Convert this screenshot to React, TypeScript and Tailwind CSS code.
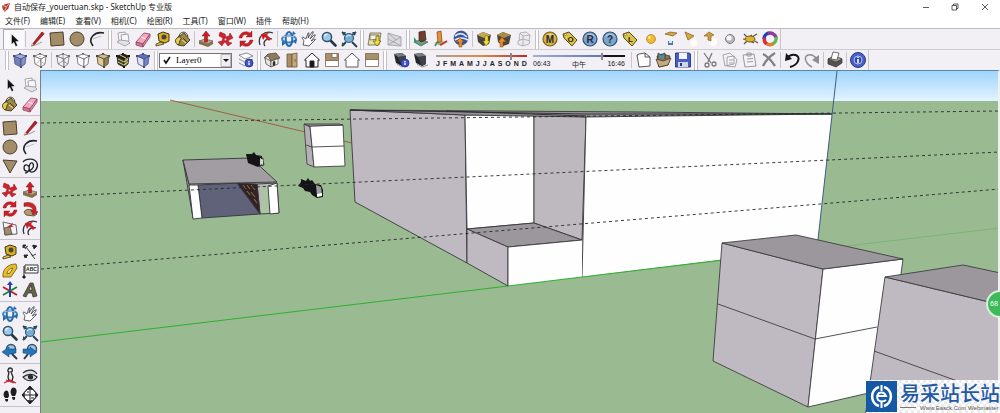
import React, { useState } from 'react';

const cube = (face: string, side: string, top: string, line: string) => (
  <g stroke={line} strokeWidth="0.8" strokeLinejoin="round">
    <path fill={side} d="M4 6l7 3v8l-6-3z" />
    <path fill={face} d="M11 9l5-3-1 8-4 3z" />
    <path fill={top} d="M4 6l6-2 6 2-5 3z" />
    <path fill={line} stroke="none" d="M3 5h2v2H3zM15 5h2v2h-2zM10 16h2v2h-2zM9 3h2v1.500H9z" />
  </g>
);

const lens = (
  <g>
    <path d="M11.500 11.500l5 5" stroke="#24384a" strokeWidth="2.600" strokeLinecap="round" />
    <circle cx="8" cy="8" r="4.600" fill="#9cc9ea" stroke="#33536b" strokeWidth="1.500" />
    <path d="M5.500 7.500a3 3 0 0 1 3-2.300" stroke="#e9f6ff" strokeWidth="1.300" fill="none" />
  </g>
);

const coin = (fill: string, rim: string, letter: string) => (
  <g>
    <circle cx="10" cy="10" r="7" fill={fill} stroke={rim} strokeWidth="1.200" />
    <path d="M5 8a5.500 5.500 0 0 1 10 0q-5-3-10 0z" fill="#fff" opacity="0.45" />
    <text x="10" y="13.500" textAnchor="middle" fontSize="10" fontWeight="700" fill="#222b38">{letter}</text>
  </g>
);

const tag = (letter: string) => (
  <g>
    <path d="M3 5l6-2 8 8-5 6-8-8z" fill="#dfc347" stroke="#55491c" strokeWidth="1" />
    <circle cx="5.500" cy="5.500" r="1.100" fill="#fff" stroke="#55491c" strokeWidth="0.600" />
    <text x="10.500" y="13" textAnchor="middle" fontSize="8" fontWeight="700" fill="#26220f">{letter}</text>
  </g>
);

const infoDot = (cx: number, cy: number, r: number) => (
  <g>
    <circle cx={cx} cy={cy} r={r} fill="#3f55c9" stroke="#22307f" strokeWidth="0.800" />
    <path d={`M${cx} ${cy - r / 2}v1.200M${cx} ${cy - 0.3}v${r / 2 + 0.3}`} stroke="#fff" strokeWidth="1.400" />
  </g>
);

const camera = (
  <g>
    <path d="M3 4l8-1 4 3v8l-4 2-6-3z" fill="#24272b" />
    <path d="M3 4l8-1 4 3-8 1z" fill="#777c82" />
    <path d="M7 7l8-1v8l-4 2z" fill="#3f444a" />
    <path d="M6 14l5 3 6-2" stroke="#8d9297" fill="none" />
  </g>
);

const ICONS: Record<string, React.ReactNode> = {
  select: <path d="M7.500 4v10.500l2.300-2.200 1.900 4.200 1.900-.9-1.900-4 3.300-.3z" fill="#111" stroke="#fff" strokeWidth="0.400" />,
  pencil: (
    <g>
      <path d="M4 17L15 3l2.200 1.700L7 16z" fill="#c11f25" stroke="#6a1014" strokeWidth="0.700" />
      <path d="M4 17l.8-3 2.200 2z" fill="#e7c69a" />
      <path d="M5 17q5-1 10-4" stroke="#777" strokeWidth="0.700" fill="none" />
    </g>
  ),
  rect: <path d="M3 4l13-1 1 13-13 1z" fill="#a38c68" stroke="#4b3f2d" strokeWidth="1" />,
  circle: <circle cx="10" cy="10" r="7" fill="#a38c68" stroke="#4b3f2d" strokeWidth="1" />,
  polygon: <path d="M3 4l14 1-7 12z" fill="#a38c68" stroke="#4b3f2d" strokeWidth="1" />,
  arc: (
    <g fill="none" stroke="#20242c">
      <path d="M6 17C0 9 8 2 17 4" strokeWidth="1.600" />
      <path d="M6 10l8-3" stroke="#a3a3a3" strokeWidth="0.700" />
    </g>
  ),
  freehand: (
    <g fill="none" stroke="#20242c" strokeWidth="1.300">
      <path d="M3 6c3-4 12-4 14 1s-3 10-6 9-2-8 0-9 4 3 1 6-8 3-8-1 4-4 5-1-1 6-4 6" />
    </g>
  ),
  component: (
    <g fill="#f7f7f9" stroke="#9b9ba3" strokeWidth="0.900">
      <path d="M5 4l7-1 1 7-7 2z" />
      <path d="M8 6l7-1 1 7-7 2z" />
      <path d="M4 13l3-2 8 1 2 2-5 3z" fill="#e3e3e8" />
    </g>
  ),
  eraser: (
    <g stroke="#8b4560" strokeWidth="0.800">
      <path d="M3 13l8-9 6 1-7 10z" fill="#f4a8bd" />
      <path d="M3 13l7 2v3l-7-2z" fill="#d9758f" />
      <path d="M10 15l7-10v3l-7 10z" fill="#e48fa6" />
      <path d="M8 8l5 2" stroke="#fff" />
    </g>
  ),
  paint: (
    <g stroke="#3c3618" strokeWidth="0.900">
      <path d="M5 8l6-4 6 7-6 6-6-1z" fill="#9c8848" />
      <path d="M4 9c-3 2-1 6 1 7 2-1 1-4 3-6 1-2-2-3-4-1z" fill="#e3cf4c" />
      <path d="M6 8c0-6 8-7 9 0M10 9l5 5" fill="none" />
      <path d="M9 11l4 3" stroke="#fff2a0" />
    </g>
  ),
  tape: (
    <g>
      <path d="M5 5l5-2 6 2v7l-4 2-6-2z" fill="#dcae22" stroke="#3f3618" strokeWidth="1" />
      <circle cx="11" cy="8" r="2.500" fill="#44453b" />
      <path d="M8 13l-5 2v2l8-2z" fill="#e8c53d" stroke="#3f3618" strokeWidth="0.800" />
    </g>
  ),
  pushpull: (
    <g>
      <path d="M3 12l6-2 8 2-5 3z" fill="#c1a987" stroke="#54472f" strokeWidth="0.600" />
      <path d="M3 12l9 3v3l-9-3zM12 15l5-3v3l-5 3z" fill="#826e4e" />
      <path d="M10 2l4 5h-2.500v6h-3V7H6z" fill="#cf1d24" stroke="#7d1115" strokeWidth="0.500" />
    </g>
  ),
  move: (
    <g fill="#d2232a" stroke="#861318" strokeWidth="0.500">
      <path d="M4 3l5 2 1 3 3-1 1-3 3 5-4 2-1 2 4 1-4 3-3-4-2 2-1 2-4-4 4-1 1-3-4-2z" />
      <path d="M9 9l2 1-1 2-2-1z" fill="#f3f0f4" />
    </g>
  ),
  rotate: (
    <g fill="#ce1f27" stroke="#7e1015" strokeWidth="0.400">
      <path d="M3 9a7 7 0 0 1 11-5l2-2v6h-6l2-2a4 4 0 0 0-6 3z" />
      <path d="M17 11a7 7 0 0 1-11 5l-2 2v-6h6l-2 2a4 4 0 0 0 6-3z" />
    </g>
  ),
  offset: (
    <g fill="none">
      <path d="M4 16C1 8 8 1 17 4" stroke="#35343a" strokeWidth="1.300" />
      <path d="M9 17c-3-4 2-9 7-7" stroke="#35343a" strokeWidth="1.300" />
      <path d="M5 5l8-1-2 2 4 4-2 2-4-4-2 3z" fill="#cf1d24" />
    </g>
  ),
  follow: (
    <g>
      <path d="M4 13c2-4 8-3 11 0l2 2-3 2-8-1z" fill="#b39a72" stroke="#4b3f2d" strokeWidth="0.800" />
      <path d="M4 4c8-2 13 2 12 8l2 1-5 3-2-5 2 .500c0-3-4-5-9-4z" fill="#d0242b" stroke="#6d1014" strokeWidth="0.500" />
    </g>
  ),
  scale: (
    <g stroke="#55565a" strokeWidth="0.900">
      <path d="M3 4l13 3 1 9-12 1z" fill="#f6f5f6" />
      <path d="M4 10l6-1 2 7-7 1z" fill="#a28b68" />
      <path d="M7 9l6-4-1 3 2 1z" fill="#cf1d24" stroke="none" />
    </g>
  ),
  orbit: (
    <g fill="none" strokeWidth="2">
      <ellipse cx="10" cy="10" rx="7" ry="3.500" stroke="#3b84c4" />
      <ellipse cx="10" cy="10" rx="3.300" ry="7" stroke="#286baa" />
      <path d="M14 2l3 3-4 1zM3 12l4 2-4 3zM14 12l4-2-1 5z" fill="#2467a8" stroke="none" />
      <path d="M4 8q6-3 11 0" stroke="#b0dcf7" strokeWidth="0.800" />
    </g>
  ),
  pan: <path d="M4 16l1-4c-1-2-3-4-1-4l3 2 2-6q1-1 1 1L9 9l4-6q2-1 1 1l-3 6 4-4q2-1 1 1l-4 5 4-2q1 0 0 1l-6 6z" fill="#fff" stroke="#3a3b42" strokeWidth="0.800" />,
  zoom: lens,
  zoomExtents: (
    <g>
      <path d="M3 3l4 3M17 3l-4 3M3 17l4-4M13 13l5 5" stroke="#2a4151" strokeWidth="2" />
      <circle cx="10" cy="9" r="4.500" fill="#77add5" stroke="#355b76" strokeWidth="1.200" />
      <path d="M3 3l4 0-3 4zM17 3h-4l3 4zM3 17v-4l3 3z" fill="#2b4b60" />
      <path d="M7 8q2-3 5-1" stroke="#def3ff" fill="none" />
    </g>
  ),
  zoomPrev: (
    <g>
      <path d="M12 12l5 5" stroke="#24384a" strokeWidth="2" />
      <circle cx="11" cy="7" r="4.500" fill="#9cc9ea" stroke="#33536b" strokeWidth="1.500" />
      <path d="M16 7H9V5l-7 5 7 5v-3l7-1z" fill="#2376b9" stroke="#123c63" strokeWidth="0.500" />
    </g>
  ),
  zoomNext: (
    <g>
      <path d="M8 12l-4 5" stroke="#24384a" strokeWidth="2" />
      <circle cx="12" cy="7" r="4.500" fill="#9cc9ea" stroke="#33536b" strokeWidth="1.500" />
      <path d="M3 7l7 0V5l7 5-7 5v-3l-7-1z" fill="#2376b9" stroke="#123c63" strokeWidth="0.500" />
    </g>
  ),
  addLocation: (
    <g stroke="#555044" strokeWidth="0.700">
      <path d="M5 4h11l-2 12H3z" fill="#e9e2a7" />
      <path d="M5 6l9 0-1 4-8 1z" fill="#f6f3dc" />
      <path d="M11 7h3v5h2l-4 5-4-5h3z" fill="#f5df2a" />
    </g>
  ),
  terrain: (
    <g fill="#dadadd" stroke="#999a9e" strokeWidth="0.800">
      <path d="M3 4l13 4v9l-13-1z" />
      <path d="M3 4l8 7-8 5M11 11l5-3M3 10l13 7" fill="none" />
    </g>
  ),
  texture: (
    <g>
      <path d="M3 13l6-2 8 2-7 4z" fill="#6aa184" stroke="#34624b" strokeWidth="0.700" />
      <path d="M8 3l6-1 1 9-5 2-2-2z" fill="#713d30" stroke="#392019" strokeWidth="0.700" />
      <path d="M3 8l3 4-3 2z" fill="#32996a" />
    </g>
  ),
  building: (
    <g>
      <path d="M3 14l5-2 9 1-7 4z" fill="#9bb594" />
      <path d="M6 3l4-1 1 10-4 2z" fill="#ed8e2e" stroke="#75411a" strokeWidth="0.700" />
      <path d="M9 16l7-4" stroke="#cc3329" strokeWidth="1.500" />
      <path d="M4 17l3-5" stroke="#4b8c4b" strokeWidth="1.500" />
    </g>
  ),
  earth: (
    <g>
      <circle cx="10" cy="9" r="7" fill="#39549d" stroke="#23356b" strokeWidth="0.600" />
      <path d="M4 7q6-5 12 1M4 11q6-4 13 0" stroke="#dfe8f7" strokeWidth="1.700" fill="none" />
      <path d="M8 18v-5H5l4-4 4 4h-2v5z" fill="#ec8c26" stroke="#754615" strokeWidth="0.500" />
    </g>
  ),
  getModels: (
    <g>
      <path d="M3 6l6-3 8 3-2 9-6 2-5-4z" fill="#45443d" />
      <path d="M3 6l6-3 8 3-7 3z" fill="#c3a954" />
      <path d="M11 7h3v5h2l-4 5-3-5h2z" fill="#f5df2a" stroke="#6e6118" strokeWidth="0.500" />
    </g>
  ),
  shareModel: (
    <g>
      <path d="M3 6l6-3 8 3-2 9-6 2-5-4z" fill="#4b463b" />
      <path d="M3 6l6-3 8 3-7 3z" fill="#aa8c48" />
      <path d="M6 18v-5H4l4-5 4 5H9v5z" fill="#e58c26" stroke="#744415" strokeWidth="0.500" />
    </g>
  ),
  shareComponent: (
    <g fill="#ececee" stroke="#a3a3a8" strokeWidth="0.800">
      <path d="M6 4l6-1 4 3-1 6-6 1-4-3z" />
      <path d="M4 12l5-2 7 2-1 3-6 2-5-2zM9 13v4M6 4l3 3 7-1M9 7v6" />
    </g>
  ),
  mCoin: coin('#dab13b', '#7a621d', 'M'),
  oTag: tag('O'),
  rCoin: coin('#7da2cf', '#34516f', 'R'),
  qCoin: coin('#7aa5cd', '#34516f', '?'),
  lTag: tag('L'),
  omni: <g><circle cx="11" cy="10" r="4.500" fill="#f1b92c" stroke="#a87d23" strokeWidth="0.700" /><circle cx="9.500" cy="8.500" r="1.500" fill="#fde89b" /></g>,
  plane: <g><path d="M5 5l5-2 7 1-4 3z" fill="#dba73d" stroke="#765b26" strokeWidth="0.700" /><path d="M8 12h5v4H8z" fill="#4b79a8" /><path d="M9 12h3v2H9z" fill="#d5e8f7" /></g>,
  spot: <g><circle cx="14" cy="14" r="3.500" fill="#fffef6" /><path d="M5 3l9 4-6 4z" fill="#dba737" stroke="#785c20" strokeWidth="0.700" /></g>,
  ies: <g><circle cx="13" cy="13" r="4" fill="#fffef6" /><path d="M4 7l5-4 5 3-3 1v5l-3-1V7z" fill="#d49a37" stroke="#795721" strokeWidth="0.600" /></g>,
  sphere: <g><circle cx="10" cy="10" r="4.500" fill="#b9b9bd" stroke="#66676c" strokeWidth="0.800" /><circle cx="9" cy="9" r="2.500" fill="#f9f9fa" /></g>,
  bug: <g><path d="M4 5l4 4 4-3M3 10l5 1-4 4M10 12l4 2M12 8l5-3M13 11l5 3" stroke="#5d5530" strokeWidth="1.200" fill="none" /><ellipse cx="10" cy="10" rx="5" ry="3" fill="#d7b42f" stroke="#7a611c" /></g>,
  swirl: (
    <g fill="none" strokeWidth="3.500">
      <path d="M4 10a6 6 0 0 1 5-6" stroke="#283fad" />
      <path d="M8 4.500a6 6 0 0 1 8 4" stroke="#8a39a2" />
      <path d="M16 8a6 6 0 0 1-4 7" stroke="#68b64c" />
      <path d="M13 15a6 6 0 0 1-7-1" stroke="#de7f32" />
      <path d="M6.500 15a6 6 0 0 1-2-6" stroke="#d82d42" />
    </g>
  ),
  xray: cube('#8895c8', '#7481b9', '#a3afda', '#434d7e'),
  backEdges: <g>{cube('#fff', '#fff', '#fff', '#666')}<path d="M10 4v7l-5 3M10 11l5 3" stroke="#888" strokeDasharray="1 1" fill="none" /></g>,
  wire: <g>{cube('#f4f2f6', '#f4f2f6', '#f4f2f6', '#707075')}<path d="M10 4v7l-5 3M10 11l5 3" stroke="#777" strokeWidth="0.700" fill="none" /></g>,
  hidden: cube('#fff', '#fff', '#fff', '#66666c'),
  shaded: cube('#91805a', '#e0cc93', '#cfbd89', '#4c4738'),
  textured: <g>{cube('#8d8050', '#3d3a27', '#23231d', '#15150f')}<path d="M5 9l6 3 4-3M5 12l6 3 4-3M7 5l6 3" stroke="#dfd381" fill="none" /></g>,
  mono: cube('#7384ce', '#dde2f5', '#5d70bf', '#414d7d'),
  layers: (
    <g>
      <path d="M3 5l8-2 6 3-8 3zM3 9l6 3 8-3M3 13l6 3 8-3" fill="#fff" stroke="#6a7478" strokeWidth="0.800" />
      {infoDot(13, 13, 4)}
    </g>
  ),
  iso: (
    <g stroke="#44413a" strokeWidth="0.700">
      <path d="M3 8l6 3v6l-5-3z" fill="#e9e4dc" />
      <path d="M9 11l7-3v6l-7 3z" fill="#fff" />
      <path d="M2 8l4-4 8-1 4 5-9 3-3-5z" fill="#8e7b5c" />
      <path d="M11 12l2-1v4l-2 1z" fill="#222" />
    </g>
  ),
  topView: <g stroke="#66543a" strokeWidth="0.800"><path d="M5 4h5v13H5z" fill="#ab9065" /><path d="M10 4l5-1v14h-5z" fill="#c6aa7c" /><path d="M13 9v3" /></g>,
  front: <g stroke="#26262a" strokeWidth="1"><path d="M2.500 10L10 3l7.500 7H16v7H4v-7z" fill="#fff" /><path d="M8 11h4v6H8z" fill="#161619" /></g>,
  rightView: <g stroke="#75664e" strokeWidth="0.800"><path d="M3.500 3.500h13v7h-13z" fill="#a7916b" /><path d="M3.500 10.500h13v6h-13zM10 3.500h5v4h-5z" fill="#fff" /></g>,
  back: <path d="M2.500 10L10 3l7.500 7H16v7H4v-7z" fill="#fff" stroke="#4b4b50" strokeWidth="0.900" />,
  leftView: <g stroke="#75664e" strokeWidth="0.800"><path d="M3.500 3.500h13v6h-13z" fill="#a7916b" /><path d="M3.500 9.500h13v7h-13z" fill="#fff" /></g>,
  shadowInfo: <g>{camera}{infoDot(14, 13, 4)}</g>,
  shadow: camera,
  newFile: <path d="M4 5l2-1 6-1 5 4v9l-11 1zM12 3v4h5" fill="#fff" stroke="#47474c" strokeWidth="0.900" />,
  open: (
    <g stroke="#45392a" strokeWidth="0.800">
      <path d="M4 6l5-2 8 2-2 9-9 2z" fill="#8a7350" />
      <path d="M5 8V3l3 2 4-2v6" fill="#4f8ea4" />
      <path d="M3 9l7 2 8-3-3 7-9 2z" fill="#c5ab7d" />
    </g>
  ),
  save: (
    <g>
      <path d="M2.500 3h14l1 1v13h-15z" fill="#4a5dc3" stroke="#273476" strokeWidth="0.900" />
      <path d="M6 3h8v6H6z" fill="#f4f7ff" />
      <path d="M5 12h10v5H5z" fill="#ccd6ec" />
      <path d="M7 13h2v3H7z" fill="#293776" />
    </g>
  ),
  cut: <g fill="none" stroke="#78797e" strokeWidth="1.300"><path d="M5 3l7 10M13 3L9 12" /><circle cx="15" cy="14" r="2" /><circle cx="8" cy="15" r="2" /></g>,
  copy: <g fill="#f5f4f6" stroke="#9b9ba0" strokeWidth="0.900"><path d="M4 5l7-2 4 4v7l-9 2zM8 7l7-1 3 4-2 7-8-1z" /><path d="M10 10h4M10 13h4" /></g>,
  paste: <g fill="#f4f3f5" stroke="#98989d" strokeWidth="1"><path d="M4 5l11-1 2 12-11 1zM8 3h4v3H8z" /><path d="M8 9l6-.5M8 12l6-.5" /></g>,
  del: <path d="M4 4q6 3 12 12M16 3Q8 8 4 16" stroke="#808086" strokeWidth="2.300" fill="none" />,
  undo: <g fill="none" stroke="#161619" strokeWidth="2"><path d="M5 8c5-6 14-3 11 3-1 3-4 5-8 6" /><path d="M4 3l-1 8 7-2" fill="#161619" stroke="none" /></g>,
  redo: <g fill="none" stroke="#8d8e93" strokeWidth="1.500"><path d="M14 8C9 2 1 5 4 11c1 3 4 5 6 6" /><path d="M17 5v9l-7-4z" fill="#8d8e93" stroke="none" /></g>,
  print: (
    <g stroke="#333" strokeWidth="0.700">
      <path d="M3 9l5-2 9 2v4l-6 4-8-3z" fill="#55544c" />
      <path d="M3 9l8 3 6-3-2-1-5-1-2 0z" fill="#b0aca0" />
      <path d="M6 9l2-7 6 1-2 7z" fill="#fff" />
    </g>
  ),
  info: <g><circle cx="10" cy="10" r="7.500" fill="#4860cf" stroke="#29377f" strokeWidth="1" /><circle cx="10" cy="10" r="4" fill="#3448ac" stroke="#b5c4f2" /><path d="M10 7v1M10 9v4" stroke="#fff" strokeWidth="1.600" /></g>,
  dimension: (
    <g stroke="#2c2c30" strokeWidth="0.900" fill="none">
      <path d="M4 6l4-2M12 14l4-2M3 3l3 4M6 5l7 9M11 12l4 5M12 4l4 1M4 13l3 3" />
      <path d="M3 3h3l-3 3zM13 3l4 1-3 3zM4 13h4l-3 3z" fill="#222" />
    </g>
  ),
  protractor: <g stroke="#7a6317" strokeWidth="0.900"><path d="M3 16C2 8 8 3 16 3l1 4-6 9z" fill="#e7bd2d" /><path d="M7 13c0-3 3-6 6-6l-3 5z" fill="#fbe896" /></g>,
  label: (
    <g>
      <path d="M5 4h13v8H5z" fill="#fff" stroke="#333" />
      <text x="11.500" y="10" textAnchor="middle" fontSize="5" fontWeight="700" fill="#222">ABC</text>
      <path d="M4 5v11M3 15h2v2H3z" stroke="#222" />
    </g>
  ),
  axes: (
    <g strokeWidth="2" fill="none">
      <path d="M10 11V4" stroke="#2742b4" /><path d="M3 7l7 4 7 4" stroke="#be2027" /><path d="M3 15l7-4 7-4" stroke="#21813b" />
      <path d="M7 5l3-4 3 4z" fill="#2742b4" stroke="none" /><path d="M10 11v6" stroke="#283f97" />
    </g>
  ),
  text3d: <g stroke="#302f26" strokeWidth="0.700"><path d="M3 16L10 3h3l4 13-4 1-1-4H8l-2 4z" fill="#66634c" /><path d="M9 10l2-5 1 5z" fill="#efedf1" /></g>,
  positionCamera: (
    <g fill="none" stroke="#26262b" strokeWidth="1.300">
      <path d="M10 2c3 0 3 4 1 4l2 5-1 4H9l-1-4 1-5C7 6 8 2 10 2z" fill="#eee" />
      <path d="M4 17l6-3 6 3M6 14l8 3" stroke="#c42b31" />
    </g>
  ),
  look: (
    <g fill="none" stroke="#28292d" strokeWidth="1.200">
      <path d="M3 7c4-4 11-4 14 1M3 11c4 5 11 5 14 0-4-4-10-3-14 0z" fill="#dadade" />
      <circle cx="10.500" cy="11" r="2" fill="#2b2c31" />
    </g>
  ),
  walk: <g fill="#1e1e22"><path d="M5 6c3-2 4 2 4 5l-1 2H5C3 11 3 8 5 6zM5 14h3c1 3-3 4-3 0zM12 3c3-2 6 2 4 6l-1 2h-3c-2-3-2-6 0-8zM12 12h3c1 4-3 4-3 0z" /></g>,
  section: (
    <g fill="#fff" stroke="#232327" strokeWidth="1">
      <path d="M10 1l8 9-8 9-8-9z" fill="#232327" />
      <circle cx="10" cy="10" r="6" />
      <path d="M4 10h12M10 4v12M7 7h2M11 13h3" />
    </g>
  ),
};

const NAMES: Record<string, string> = {
  select: '选择', pencil: '直线', rect: '矩形', circle: '圆', arc: '圆弧', eraser: '擦除', paint: '颜料桶',
  tape: '卷尺', pushpull: '推/拉', move: '移动', rotate: '旋转', offset: '偏移', orbit: '环绕观察', pan: '平移',
  zoom: '缩放', save: '保存', undo: '撤销', redo: '重做', print: '打印',
};

const Tool = ({ id }: { id: string }) => (
  <button aria-label={NAMES[id] || id} className="w-5 h-[19px] shrink-0 flex items-center justify-center hover:bg-white">
    <svg viewBox="0 0 20 20" className="w-5 h-5 shrink-0 font-['Liberation_Sans']">{ICONS[id]}</svg>
  </button>
);

const Group = ({ ids }: { ids: string[] }) => (
  <div className="flex items-center">{ids.map((id) => <Tool key={id} id={id} />)}</div>
);

// thin line inside one toolbar
const Thin = () => <div className="w-px h-4 mx-px shrink-0 bg-[#c9c5cb]" />;
// grip between two docked toolbars
const Grip = () => <div className="w-1 h-[19px] mx-px shrink-0 border-x border-[#c4c0c6] bg-white" />;

const MENUS = ['文件(F)', '编辑(E)', '查看(V)', '相机(C)', '绘图(R)', '工具(T)', '窗口(W)', '插件', '帮助(H)'];

const PALETTE = [
  ['select', 'component', 'paint', 'eraser'],
  ['rect', 'pencil', 'circle', 'arc', 'polygon', 'freehand'],
  ['move', 'pushpull', 'rotate', 'follow', 'scale', 'offset'],
  ['tape', 'dimension', 'protractor', 'label', 'axes', 'text3d'],
  ['orbit', 'pan', 'zoom', 'zoomExtents', 'zoomPrev', 'zoomNext'],
  ['positionCamera', 'look', 'walk', 'section'],
];

const ShadowSliders = () => {
  const [month, setMonth] = useState(10);
  const [time, setTime] = useState(76);
  const slider = 'appearance-none block w-full h-[2px] my-[3px] [&::-webkit-slider-thumb]:appearance-none [&::-webkit-slider-thumb]:w-[2px] [&::-webkit-slider-thumb]:h-[7px] [&::-webkit-slider-thumb]:bg-[#8a878d]';
  return (
    <div className="flex gap-[6px] pl-[5px] w-[199px] shrink-0 font-['Liberation_Sans'] text-[7px] leading-[8px] text-[#222]">
      <div className="w-[91px]">
        <input type="range" aria-label="日期" min={0} max={12} value={month} onChange={(e) => setMonth(+e.target.value)}
          className={`${slider} bg-linear-to-r from-[#a3a294] via-[#dd8a45] to-[#b5262e]`} />
        <div className="flex justify-between font-bold">{'JFMAMJJASOND'.split('').map((m, i) => <span key={i}>{m}</span>)}</div>
      </div>
      <div className="w-[92px]">
        <input type="range" aria-label="时间" min={0} max={100} value={time} onChange={(e) => setTime(+e.target.value)}
          className={`${slider} bg-linear-to-r from-[#a4b0d4] from-0% via-[#6573b8] via-75% to-[#15151c] to-78%`} />
        <div className="flex justify-between h-2">
          <span>06:43</span>
          <span className="font-['Noto_Sans_CJK_SC',sans-serif]">中午</span>
          <span>16:46</span>
        </div>
      </div>
    </div>
  );
};

const Scene = () => (
  <svg viewBox="41 71 957 342" className="block w-full h-auto">
    <defs>
      <linearGradient id="sky" x1="0" y1="0" x2="0" y2="1">
        <stop offset="0" stopColor="#9fd4fc" />
        <stop offset="1" stopColor="#e3f4ff" />
      </linearGradient>
    </defs>
    <rect x="41" y="71" width="957" height="30" fill="url(#sky)" />
    <rect x="41" y="101" width="957" height="312" fill="#9abb91" />
    {/* axes */}
    <path d="M170 100L352 143" stroke="#a2543c" strokeWidth="0.900" />
    <path d="M41 342L508 286" stroke="#2fae33" />
    <path d="M582 277L1000 228" stroke="#6fb068" strokeWidth="0.700" />

    {/* main building */}
    <g stroke="#3a383c" strokeWidth="0.900" strokeLinejoin="round">
      <path d="M350 110L465 115L467 263L355 202z" fill="#bfbac1" />
      <path d="M465 115L534 114V223L467 229z" fill="#fefefe" />
      <path d="M534 114L586 117L582 240L534 223z" fill="#bdb9be" />
      <path d="M586 117L832 114L817 248L582 277z" fill="#fefefe" stroke="none" />
      <path d="M586 117L582 277" />
      <path d="M467 229L534 223L582 240L508 247z" fill="#9c979c" />
      <path d="M467 229L508 247V286L467 263z" fill="#bfbac1" />
      <path d="M508 247L582 240V277L508 286z" fill="#fefefe" stroke="none" />
      <path d="M508 286V247L582 240" fill="none" />
      <path d="M350 110L640 112L832 114L663 116L586 117L465 115z" fill="#969398" />
      <path d="M350 110L586 114L832 114M446 111L586 116" fill="none" stroke="#29272b" />
    </g>
    <path d="M508 286L722 260" stroke="#2fae33" />
    <path d="M837 71L817 248" stroke="#3e5c88" />

    {/* small stacked box */}
    <g stroke="#444046" strokeWidth="0.900" strokeLinejoin="round">
      <path d="M304 124L310 127L314 167L307 164z" fill="#b5b0b6" />
      <path d="M310 126L343 125L345 166L314 167z" fill="#fefefe" />
      <path d="M304 124L310 126L343 125L339 124z" fill="#9c979c" />
      <path d="M306 145L312 147L344 146" fill="none" />
    </g>

    {/* open shed */}
    <g stroke="#36343a" strokeWidth="0.900" strokeLinejoin="round">
      <path d="M198 185L240 183L260 214L202 218z" fill="#60627a" />
      <path d="M183 160L193 218L189 184z" fill="#aaa5ab" />
      <path d="M189 185H198L202 218L193 219z" fill="#fefefe" />
      <path d="M257 184L277 183L279 213L260 214z" fill="#b9b5ba" />
      <path d="M262 187L268 186L270 213H261z" fill="#a9c6a4" stroke="none" />
      <path d="M268 186L277 183L279 213L270 214z" fill="#fefefe" />
      <path d="M237 183L257 184L260 214z" fill="#312321" />
      <path d="M183 160L251 158L277 182L189 184z" fill="#a29da3" />
    </g>
    <path d="M243 185l3 4M247 185l3 4M251 185l4 5M247 191l3 4M251 192l4 5M254 199l3 4" stroke="#806452" strokeWidth="1.200" />

    {/* furniture */}
    <g>
      <path d="M246 154l6 0 2-2 2 3 6 1v9l-4 2-5-2-5-2z" fill="#141316" />
      <path d="M259 156q5 1 4 5l1 4-5 1" fill="none" stroke="#333" />
      <path d="M260 158l3 2v4l-3 1z" fill="#d7d5d7" />
      <path d="M298 186l3-4 0-3 5 2 2-3 2 3 2-1 3 4 6 1 2 5v7l-6 1-5-3-2-3-5-1-2-3z" fill="#141316" />
      <path d="M316 185l5 2 1 8-5 1z" fill="#a09da2" />
      <path d="M317 194l5-1v3l-5 1z" fill="#fff" />
    </g>

    {/* guides */}
    <path d="M41 123L1000 111M41 197L1000 152M41 269L1000 189" stroke="#28272a" strokeWidth="0.900" strokeDasharray="3 3" fill="none" />

    {/* front boxes */}
    <g stroke="#3f3d42" strokeWidth="0.900" strokeLinejoin="round">
      <path d="M722 243L823 269L808 407L713 361z" fill="#bfbac1" />
      <path d="M823 269L903 259L886 389L808 407z" fill="#fefefe" />
      <path d="M722 243L796 235L903 259L823 269z" fill="#9c979c" />
      <path d="M718 304L815 339L877 327" fill="none" />
      <path d="M885 277L1010 307V425H864z" fill="#bfbac1" />
      <path d="M885 277L963 265L1010 275V307z" fill="#9c979c" />
      <path d="M874 351L1010 400" />
    </g>
  </svg>
);

export default function App() {
  const [layer, setLayer] = useState('Layer0');

  return (
    <div className="min-h-screen flex flex-col bg-[#f3f0f5] text-[#222] font-['Noto_Sans','Noto_Sans_CJK_SC',sans-serif] text-[8px] overflow-hidden">
      <header className="h-[14px] flex items-center bg-white pl-[2px]">
        <svg viewBox="0 0 10 10" className="w-[9px] h-[9px] mr-[3px]">
          <path d="M0 3l4-2 5-1-2 6-4 4-2-3z" fill="#b73b31" />
          <path d="M1 3l4 1 3-3M5 4L3 9" stroke="#f3c8ba" fill="none" />
        </svg>
        <h1>自动保存_youertuan.skp - SketchUp 专业版</h1>
        <div className="ml-auto flex">
          <button aria-label="最小化" className="w-[29px] flex justify-center">
            <svg viewBox="0 0 8 8" className="w-2 h-2"><path d="M1 4.500h6" stroke="#333" strokeWidth="0.800" /></svg>
          </button>
          <button aria-label="还原" className="w-[29px] flex justify-center">
            <svg viewBox="0 0 8 8" className="w-2 h-2"><path d="M1 2.500h4.500v4.500H1zM2.500 2.500V1H7v4.500H5.500" stroke="#333" strokeWidth="0.800" fill="none" /></svg>
          </button>
          <button aria-label="关闭" className="w-[31px] flex justify-center">
            <svg viewBox="0 0 8 8" className="w-2 h-2"><path d="M1 1l6 6M7 1L1 7" stroke="#333" strokeWidth="0.800" /></svg>
          </button>
        </div>
      </header>

      <nav className="h-[14px] flex items-center bg-white">
        {MENUS.map((m) => <button key={m} className="px-[5px] whitespace-nowrap hover:bg-sky-100">{m}</button>)}
      </nav>

      <div className="h-[21px] flex items-center border-t border-[#bdbabf]">
        <div className="pl-[3px] border-r border-[#c9c5cb] flex items-center h-5">
          <div className="border-l border-t border-[#aaa7ad] bg-[#faf9fb]"><Group ids={['select']} /></div>
          <Thin />
          <Group ids={['pencil', 'rect', 'circle', 'arc']} />
          <Grip />
          <Group ids={['component', 'eraser', 'tape', 'paint']} />
          <Thin />
          <Group ids={['pushpull', 'move', 'rotate', 'offset']} />
          <Thin />
          <Group ids={['orbit', 'pan', 'zoom', 'zoomExtents']} />
          <Grip />
          <Group ids={['addLocation', 'terrain']} />
          <Grip />
          <Group ids={['texture', 'building', 'earth']} />
          <Thin />
          <Group ids={['getModels', 'shareModel', 'shareComponent']} />
          <Grip />
          <Group ids={['mCoin', 'oTag', 'rCoin', 'qCoin', 'lTag', 'omni', 'plane', 'spot', 'ies', 'sphere', 'bug', 'swirl']} />
        </div>
      </div>

      <div className="h-[21px] flex items-center border-t border-[#cfccd1]">
        <div className="pl-1 border-r border-[#c9c5cb] flex items-center h-5">
          <Grip />
          <Group ids={['xray', 'backEdges']} />
          <Thin />
          <Group ids={['wire', 'hidden', 'shaded', 'textured', 'mono']} />
          <Grip />
          <div className="relative w-[73px] h-[15px] mr-1">
            <select aria-label="图层" value={layer} onChange={(e) => setLayer(e.target.value)}
              className="appearance-none block w-full h-full pl-4 bg-white border border-[#77757a] font-['Liberation_Serif'] text-[9px] leading-[12px] text-black">
              <option>Layer0</option>
            </select>
            <svg viewBox="0 0 73 15" className="absolute inset-0 pointer-events-none">
              <path d="M5 7l2 3 4-6" stroke="#111" strokeWidth="1.600" fill="none" />
              <path d="M62 1.500h9.500v12H62z" fill="#f0eef2" stroke="#a6a3a8" strokeWidth="0.800" />
              <path d="M64 6h6l-3 3z" fill="#111" />
            </svg>
          </div>
          <Group ids={['layers']} />
          <Grip />
          <Group ids={['iso', 'topView', 'front', 'rightView', 'back', 'leftView']} />
          <Grip />
          <div className="w-[3px]" />
          <Group ids={['shadowInfo', 'shadow']} />
          <ShadowSliders />
          <Thin />
          <Group ids={['newFile', 'open', 'save']} />
          <Grip />
          <Group ids={['cut', 'copy', 'paste', 'del']} />
          <Thin />
          <Group ids={['undo', 'redo']} />
          <Thin />
          <Group ids={['print']} />
          <Thin />
          <Group ids={['info']} />
        </div>
      </div>

      <div className="flex flex-1">
        <aside className="w-[41px] shrink-0 pt-[5px] border-r border-[#77808a]">
          {PALETTE.map((ids, i) => (
            <div key={i} className="grid grid-cols-2 w-10 border-b border-[#c6c2c8] pb-[2px] mb-[2px]">
              {ids.map((id) => <Tool key={id} id={id} />)}
            </div>
          ))}
        </aside>

        <main className="relative flex-1 min-w-0 bg-[#9abb91] border-t border-t-[#5b87a3] border-r-2 border-r-[#eef1ee]">
          <Scene />
          <button aria-label="加速球" className="absolute -right-4 top-[219px] w-7 h-7 pl-[2px] rounded-full border-2 border-[#d9f0dc] bg-[#3dbb5b] text-white text-[7px] text-left">
            68
          </button>
          <a href="#easck" className="absolute -right-[2px] bottom-0 w-[134px] h-[33px] flex items-center gap-[3px] bg-[repeating-conic-gradient(#ececee_0_25%,#fff_0_50%)] bg-[length:6px_6px]">
            <svg viewBox="0 0 31 31" className="w-[31px] h-[31px] shrink-0">
              <rect width="31" height="31" fill="#1558a5" />
              <g fill="none" stroke="#fff" strokeWidth="2.600">
                <path d="M13 6a10 10 0 0 0 0 19M18 6a10 10 0 0 1 0 19" />
                <path d="M20 19q-4 3-8 0-2-4 1-7 5-2 7 3h-8M15.500 4v6M15.500 21v6" strokeWidth="2" />
              </g>
            </svg>
            <span className="block whitespace-nowrap">
              <span className="block font-['Noto_Sans_CJK_SC',sans-serif] font-medium text-[20px] leading-[22px] text-[#1f59a8]">易采站长站</span>
              <span className="flex items-center gap-1 font-['Liberation_Sans'] text-[6px] leading-[8px] text-[#555]">
                <span className="w-4 h-px bg-[#777]" />
                Www.Easck.Com Webmaster
              </span>
            </span>
          </a>
        </main>
      </div>
    </div>
  );
}
